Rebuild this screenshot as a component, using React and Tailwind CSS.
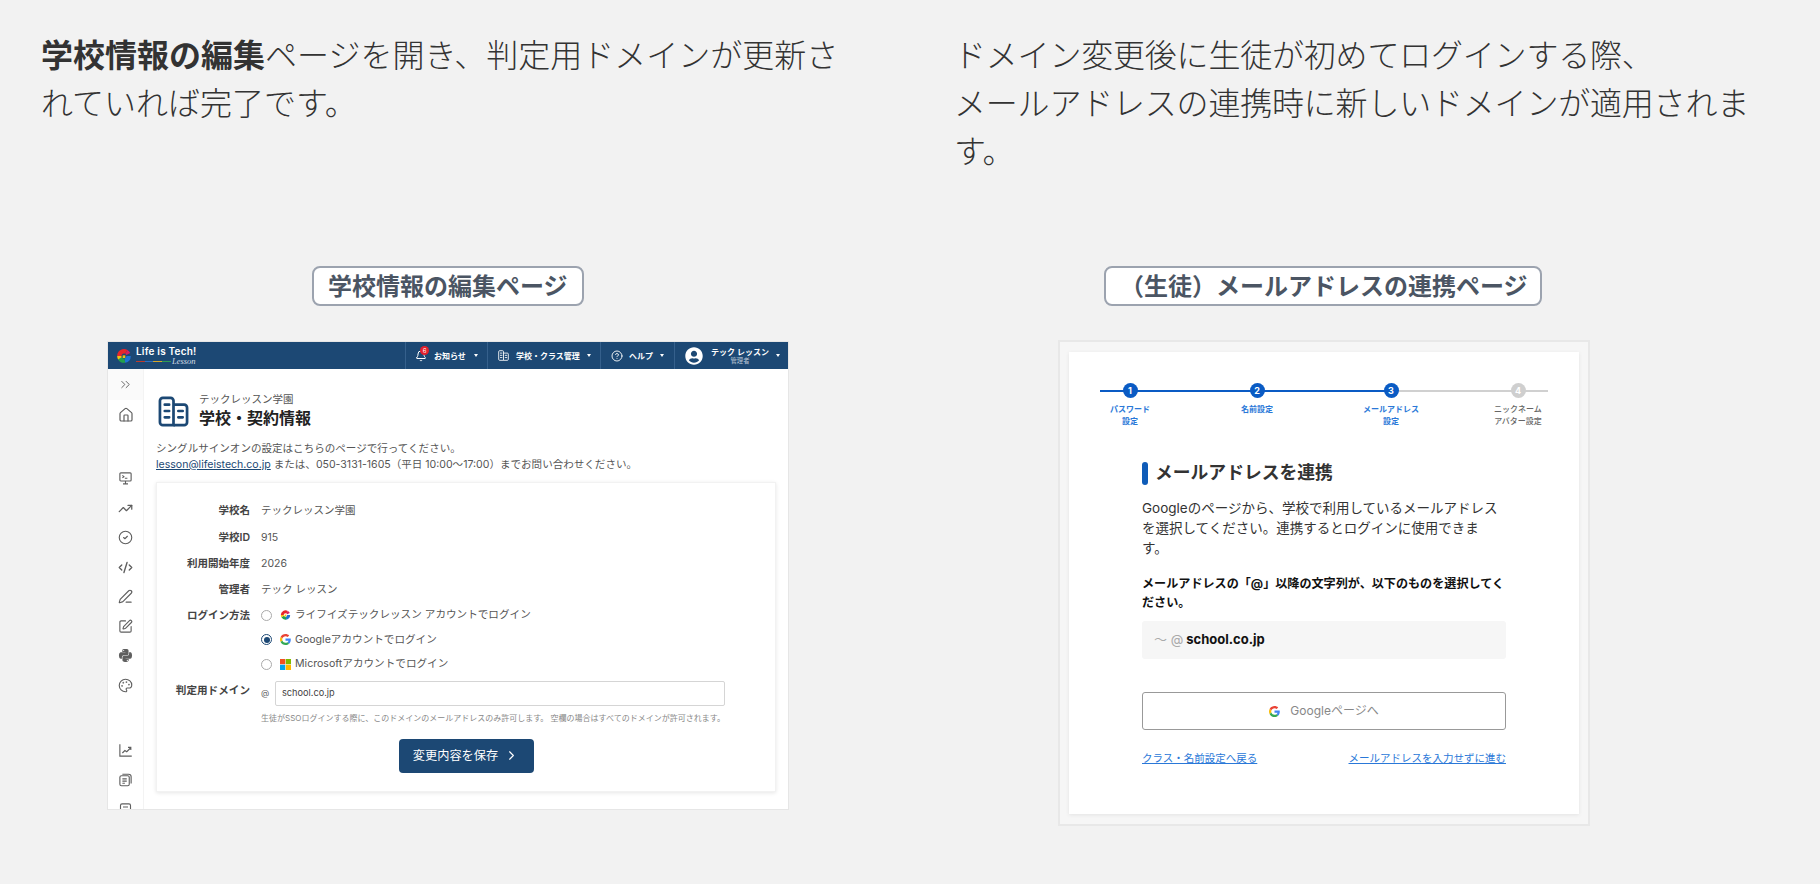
import {
  Bell,
  ChevronRight,
  ChevronsRight,
  CircleCheck,
  CircleHelp,
  CodeXml,
  House,
  Palette,
  PenLine,
  SquarePen,
  TrendingUp,
} from "lucide-react";
import { FaPython, FaUserCircle } from "react-icons/fa";

const GoogleIcon = ({ className }) => (
  <svg viewBox="0 0 48 48" className={className}>
    <path fill="#EA4335" d="M24 9.5c3.54 0 6.71 1.22 9.21 3.6l6.85-6.85C35.9 2.38 30.47 0 24 0 14.62 0 6.51 5.38 2.56 13.22l7.98 6.19C12.43 13.72 17.74 9.5 24 9.5z" />
    <path fill="#4285F4" d="M46.98 24.55c0-1.57-.15-3.09-.38-4.55H24v9.02h12.94c-.58 2.96-2.26 5.48-4.78 7.18l7.73 6c4.51-4.18 7.09-10.36 7.09-17.65z" />
    <path fill="#FBBC05" d="M10.53 28.59c-.48-1.45-.76-2.99-.76-4.59s.27-3.14.76-4.59l-7.98-6.19C.92 16.46 0 20.12 0 24c0 3.88.92 7.54 2.56 10.78l7.97-6.19z" />
    <path fill="#34A853" d="M24 48c6.48 0 11.93-2.13 15.89-5.81l-7.73-6c-2.15 1.45-4.92 2.3-8.16 2.3-6.26 0-11.57-4.22-13.47-9.91l-7.98 6.19C6.51 42.62 14.62 48 24 48z" />
  </svg>
);

const MicrosoftIcon = () => (
  <svg viewBox="0 0 22 22" className="w-[11px] h-[11px] shrink-0">
    <rect width="10.5" height="10.5" fill="#f25022" />
    <rect x="11.5" width="10.5" height="10.5" fill="#7fba00" />
    <rect y="11.5" width="10.5" height="10.5" fill="#00a4ef" />
    <rect x="11.5" y="11.5" width="10.5" height="10.5" fill="#ffb900" />
  </svg>
);

const LifeLogo = ({ className }) => (
  <svg viewBox="0 0 24 24" fill="none" strokeWidth="6.5" className={className}>
    <path d="M5 12A7 7 0 0 1 15.5 5.94" stroke="#e8262a" />
    <path d="M15.5 5.94A7 7 0 0 1 18.5 9" stroke="#d81f5f" />
    <path d="M18.9 12A7 7 0 0 1 13.2 18.9" stroke="#1f73d6" />
    <path d="M13.2 18.9A7 7 0 0 1 5.94 15.5" stroke="#22a24a" />
    <path d="M5.94 15.5A7 7 0 0 1 5 12" stroke="#f6c111" />
    <path d="M10 13h4" stroke="#f6c111" strokeWidth="4" />
  </svg>
);

const MonitorIcon = () => (
  <svg viewBox="0 0 24 24" fill="none" stroke="currentColor" strokeWidth="1.8" className="w-[15px] h-[15px]">
    <rect x="3" y="3" width="18" height="13" rx="1.5" />
    <path d="M7 7l2.5 2L7 11M11 11.5h4M12 16v4M8 20.5h8" />
  </svg>
);

const ChartIcon = () => (
  <svg viewBox="0 0 24 24" fill="none" stroke="currentColor" strokeWidth="1.8" className="w-[15px] h-[15px]">
    <path d="M3 2v19h19" />
    <path d="M7 16l4-4 3 2 6-6M16 7h4.500v4" />
  </svg>
);

const DocsIcon = () => (
  <svg viewBox="0 0 24 24" fill="none" stroke="currentColor" strokeWidth="1.8" className="w-[15px] h-[15px]">
    <rect x="3" y="6" width="15" height="16" rx="2.5" />
    <path d="M7 3.500h10a4 4 0 0 1 4 4v11" />
    <path d="M7 11h7M7 14.500h7M7 18h4" />
  </svg>
);

const DocIcon = () => (
  <svg viewBox="0 0 24 24" fill="none" stroke="currentColor" strokeWidth="1.8" className="w-[15px] h-[15px] shrink-0">
    <rect x="4" y="3" width="16" height="18" rx="2.5" />
    <path d="M8 8h8M8 12h8M8 16h4" />
  </svg>
);

const BuildingIcon = ({ className, strokeWidth = 2.5 }) => (
  <svg viewBox="0 0 32 32" fill="none" stroke="currentColor" strokeWidth={strokeWidth} className={className}>
    <path d="M2 5a3 3 0 0 1 3-3h8a3 3 0 0 1 3 3v25H5a3 3 0 0 1-3-3z" />
    <path d="M16 9h11a3 3 0 0 1 3 3v15a3 3 0 0 1-3 3H16" />
    <path d="M7 9h4.500M7 15.500h4.500M7 22h4.500M21 15.500h4.500M21 22h4.500" strokeLinecap="round" />
  </svg>
);

const Caret = () => <span className="w-0 h-0 border-x-[2.5px] border-x-transparent border-t-[3px] border-t-white" />;

const Row = ({ label, children }) => (
  <div className="flex items-center h-[26.3px] text-[10.5px]">
    <div className="w-[93px] text-right font-semibold text-[#444]">{label}</div>
    <div className="ml-[11px] text-[#555]">{children}</div>
  </div>
);

const Radio = ({ checked, children }) => (
  <div className="flex items-center h-[24.5px] text-[10.6px] text-[#555]">
    {checked ? (
      <span className="w-[11px] h-[11px] rounded-full border-[1.5px] border-[#1c4874] flex items-center justify-center">
        <span className="w-[6px] h-[6px] rounded-full bg-[#1c4874]" />
      </span>
    ) : (
      <span className="w-[11px] h-[11px] rounded-full border border-[#aaa]" />
    )}
    <span className="ml-[8px] mr-[4px] w-[11px] flex items-center">{children[0]}</span>
    <span>{children[1]}</span>
  </div>
);

const Step = ({ n, state, label, className }) => (
  <div className={"absolute top-[-7px] w-[80px] flex flex-col items-center " + className}>
    <span
      className={
        state === "done"
          ? "w-[15px] h-[15px] rounded-full bg-[#0a5bc4] text-white text-[9px] font-bold flex items-center justify-center"
          : "w-[15px] h-[15px] rounded-full bg-[#cfcfcf] text-white text-[9px] font-bold flex items-center justify-center"
      }
    >
      {n}
    </span>
    <span
      className={
        state === "done"
          ? "mt-[6px] text-[8px] leading-[11.5px] font-semibold text-[#2a78d8] text-center whitespace-pre-line"
          : "mt-[6px] text-[8px] leading-[11.5px] font-medium text-[#666] text-center whitespace-pre-line"
      }
    >
      {label}
    </span>
  </div>
);

function SchoolMock() {
  return (
    <div className="ml-[66px] mt-[35px] w-[682px] h-[469px] border border-[#e6e6e6] bg-white flex flex-col overflow-hidden">
      <header className="h-[27px] bg-[#1c4874] flex items-center text-white shrink-0">
        <div className="w-[297px] flex items-center pl-[8px]">
          <LifeLogo className="w-[16px] h-[16px]" />
          <div className="ml-[4px]">
            <div className="text-[10px] leading-[12px] font-semibold tracking-[0.2px] font-['Inter',sans-serif] whitespace-nowrap">Life is Tech!</div>
            <div className="flex items-center h-[9px]">
              <span className="w-[35px] h-px bg-[linear-gradient(90deg,#c0392b_0%,#c0392b_25%,#2f6fc0_25%,#2f6fc0_50%,#d4a72c_50%,#d4a72c_75%,#2d9b55_75%,#2d9b55_100%)]" />
              <span className="ml-[1px] text-[8.5px] leading-[9px] italic text-[#d5dde6] font-['Liberation_Serif',serif]">Lesson</span>
            </div>
          </div>
        </div>
        <div className="w-[82px] h-full border-l border-[#35608c] flex items-center pl-[9px] relative">
          <Bell className="w-[12px] h-[12px]" strokeWidth={2} />
          <span className="absolute left-[14px] top-[4px] w-[9px] h-[9px] rounded-full bg-[#e2202c] text-[6px] leading-[9px] text-center">6</span>
          <span className="ml-[7px] mr-[8px] text-[8px] font-semibold whitespace-nowrap">お知らせ</span>
          <Caret />
        </div>
        <div className="w-[113px] h-full border-l border-[#35608c] flex items-center pl-[10px]">
          <BuildingIcon className="w-[11px] h-[11px]" strokeWidth={2.5} />
          <span className="ml-[7px] mr-[7px] text-[8px] font-semibold whitespace-nowrap">学校・クラス管理</span>
          <Caret />
        </div>
        <div className="w-[74px] h-full border-l border-[#35608c] flex items-center pl-[10px]">
          <CircleHelp className="w-[12px] h-[12px]" strokeWidth={1.8} />
          <span className="ml-[6px] mr-[7px] text-[8px] font-semibold whitespace-nowrap">ヘルプ</span>
          <Caret />
        </div>
        <div className="flex-1 h-full border-l border-[#35608c] flex items-center pl-[10px]">
          <FaUserCircle className="w-[18px] h-[18px]" />
          <div className="ml-[8px] mr-[7px] w-[58px] flex flex-col items-center">
            <span className="text-[8px] leading-[10px] font-semibold whitespace-nowrap">テック レッスン</span>
            <span className="text-[6.3px] leading-[8px] text-[#b9c6d6]">管理者</span>
          </div>
          <Caret />
        </div>
      </header>
      <div className="flex flex-1 min-h-0">
        <aside className="w-[36px] shrink-0 border-r border-[#f3f3f3] text-[#5f5f5f] flex flex-col items-center">
          <div className="w-full h-[31px] shrink-0 bg-[#fafafa] flex items-center justify-center">
            <ChevronsRight className="w-[15px] h-[15px]" strokeWidth={1.5} />
          </div>
          <House className="w-[16px] h-[16px] shrink-0 mt-[7px]" strokeWidth={1.8} />
          <div className="mt-[48px] flex flex-col items-center gap-[14.5px]">
            <MonitorIcon />
            <TrendingUp className="w-[15px] h-[15px]" strokeWidth={2} />
            <CircleCheck className="w-[15px] h-[15px]" strokeWidth={1.8} />
            <CodeXml className="w-[15px] h-[15px]" strokeWidth={2.2} />
            <PenLine className="w-[15px] h-[15px]" strokeWidth={1.8} />
            <SquarePen className="w-[15px] h-[15px]" strokeWidth={1.8} />
            <FaPython className="w-[15px] h-[15px]" />
            <Palette className="w-[15px] h-[15px]" strokeWidth={1.8} />
          </div>
          <div className="mt-[50px] flex flex-col items-center gap-[14.5px]">
            <ChartIcon />
            <DocsIcon />
            <DocIcon />
          </div>
        </aside>
        <main className="flex-1 pl-[12px] pr-[12px]">
          <div className="mt-[24px] flex items-center">
            <BuildingIcon className="ml-[2px] w-[31px] h-[31px] text-[#1c4874]" strokeWidth={2.8} />
            <div className="ml-[10px]">
              <div className="text-[10.5px] leading-[14px] text-[#555]">テックレッスン学園</div>
              <div className="text-[16px] leading-[23px] font-bold text-[#222]">学校・契約情報</div>
            </div>
          </div>
          <p className="mt-[11px] text-[10.55px] leading-[16px] text-[#555] whitespace-nowrap">
            シングルサインオンの設定はこちらのページで行ってください。
            <br />
            <span className="text-[#1c4874] underline">lesson@lifeistech.co.jp</span> または、050-3131-1605（平日 10:00〜17:00）までお問い合わせください。
          </p>
          <section className="mt-[9px] h-[310px] bg-white border border-[#f2f2f2] shadow-[0_1px_4px_rgba(0,0,0,0.1)] pt-[15px]">
            <Row label="学校名">テックレッスン学園</Row>
            <Row label="学校ID">915</Row>
            <Row label="利用開始年度">2026</Row>
            <Row label="管理者">テック レッスン</Row>
            <div className="flex">
              <div className="w-[93px] pt-[5px] text-right text-[10.5px] font-semibold text-[#444]">ログイン方法</div>
              <div className="ml-[11px] flex flex-col">
                <Radio>
                  <LifeLogo className="w-[12px] h-[12px]" />
                  ライフイズテックレッスン アカウントでログイン
                </Radio>
                <Radio checked>
                  <GoogleIcon className="w-[11px] h-[11px]" />
                  Googleアカウントでログイン
                </Radio>
                <Radio>
                  <MicrosoftIcon />
                  Microsoftアカウントでログイン
                </Radio>
              </div>
            </div>
            <div className="flex mt-[4px]">
              <div className="w-[93px] pt-[2px] text-right text-[10.6px] font-semibold text-[#444] whitespace-nowrap">判定用ドメイン</div>
              <div className="ml-[11px] w-[464px]">
                <div className="flex items-center">
                  <span className="w-[14px] text-[8.5px] text-[#666]">@</span>
                  <div className="flex-1 h-[25px] border border-[#d5d5d5] rounded-[2px] pl-[6px] flex items-center text-[9.2px] text-[#444]">school.co.jp</div>
                </div>
                <p className="mt-[7px] text-[8px] leading-[10px] text-[#888] whitespace-nowrap">
                  生徒がSSOログインする際に、このドメインのメールアドレスのみ許可します。 空欄の場合はすべてのドメインが許可されます。
                </p>
              </div>
            </div>
            <div className="mt-[16px] flex justify-center">
              <button className="w-[135px] h-[34px] bg-[#1c4874] rounded-[4px] text-white text-[12.2px] flex items-center justify-center">
                変更内容を保存
                <ChevronRight className="ml-[6px] w-[15px] h-[15px]" strokeWidth={1.8} />
              </button>
            </div>
          </section>
        </main>
      </div>
    </div>
  );
}

function StudentMock() {
  return (
    <div className="ml-[104px] mt-[34px] w-[532px] h-[486px] border-2 border-[#e8e8e8] bg-[#f6f6f6] pt-[10px] px-[9px]">
      <div className="h-[462px] bg-white shadow-[0_1px_4px_rgba(0,0,0,0.08)] pt-[38px] px-[31px]">
        <div className="relative h-[2px] bg-[#d0d0d0]">
          <div className="h-full w-[290px] bg-[#0a5bc4]" />
          <Step n="1" state="done" label={"パスワード\n設定"} className="left-[-10px]" />
          <Step n="2" state="done" label="名前設定" className="left-[117px]" />
          <Step n="3" state="done" label={"メールアドレス\n設定"} className="left-[251px]" />
          <Step n="4" state="todo" label={"ニックネーム\nアバター設定"} className="left-[378px]" />
        </div>
        <div className="ml-[42px] w-[364px]">
          <div className="mt-[70px] flex items-center h-[23px]">
            <span className="w-[6px] h-[23px] rounded-[3px] bg-[#0f5cb8]" />
            <h2 className="ml-[7px] text-[17.8px] font-semibold text-[#333] whitespace-nowrap">メールアドレスを連携</h2>
          </div>
          <p className="mt-[13px] w-[356px] text-[13.5px] leading-[20px] text-[#333]">
            Googleのページから、学校で利用しているメールアドレスを選択してください。連携するとログインに使用できます。
          </p>
          <p className="mt-[16px] w-[368px] text-[12.1px] leading-[19px] font-bold text-[#111]">
            メールアドレスの「@」以降の文字列が、以下のものを選択してください。
          </p>
          <div className="mt-[9px] h-[38px] bg-[#f6f6f6] rounded-[3px] pl-[12px] flex items-center">
            <span className="text-[13px] text-[#aaa]">〜 @</span>
            <span className="ml-[3px] text-[13px] font-bold text-[#111]">school.co.jp</span>
          </div>
          <button className="mt-[33px] w-full h-[38px] border border-[#999] rounded-[3px] bg-white flex items-center justify-center text-[12px] text-[#888]">
            <GoogleIcon className="w-[11px] h-[11px]" />
            <span className="ml-[10px]">Googleページへ</span>
          </button>
          <div className="mt-[21px] flex justify-between text-[10.5px] leading-[16px] text-[#2a78d8] underline">
            <span>クラス・名前設定へ戻る</span>
            <span>メールアドレスを入力せずに進む</span>
          </div>
        </div>
      </div>
    </div>
  );
}

export default function App() {
  return (
    <div className="w-[1820px] h-[884px] overflow-hidden bg-[#f2f2f2] pt-[32px] pl-[41px] flex font-['Inter','Noto_Sans_CJK_JP',sans-serif]">
      <div className="w-[814px] shrink-0">
        <p className="h-[234px] w-[813px] text-[32px] leading-[48px] font-light text-[#333]">
          <b className="font-bold text-[#333]">学校情報の編集</b>ページを開き、判定用ドメインが更新されていれば完了です。
        </p>
        <div className="ml-[271px] w-fit h-[40px] px-[14px] border-2 border-[#9ca3af] rounded-[8px] bg-white text-[24px] leading-[38px] font-bold text-[#4b5563] whitespace-nowrap">
          学校情報の編集ページ
        </div>
        <SchoolMock />
      </div>
      <div className="ml-[99px] w-[826px] shrink-0">
        <p className="h-[234px] text-[32px] tracking-[-0.2px] leading-[48px] font-light text-[#333]">
          ドメイン変更後に生徒が初めてログインする際、
          <br />
          メールアドレスの連携時に新しいドメインが適用されます。
        </p>
        <div className="ml-[150px] w-fit h-[40px] pl-[14px] pr-[12px] border-2 border-[#9ca3af] rounded-[8px] bg-white text-[24px] leading-[38px] font-bold text-[#4b5563] whitespace-nowrap">
          （生徒）メールアドレスの連携ページ
        </div>
        <StudentMock />
      </div>
    </div>
  );
}
